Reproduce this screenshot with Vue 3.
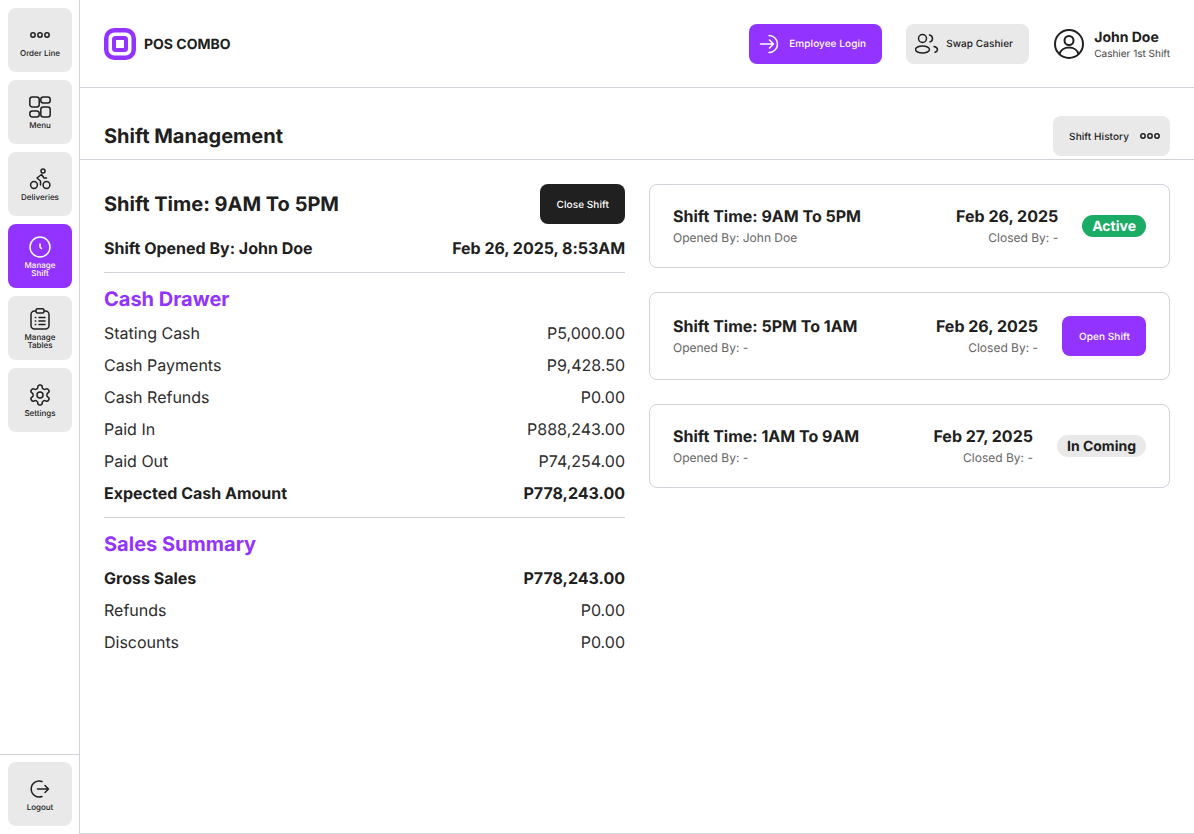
<template>
  <div class="app">
    <aside class="sidebar">
      <nav class="nav">
        <button class="nav-btn">
          <svg class="ico" viewBox="0 0 24 24"><circle cx="5" cy="12" r="2.2" /><circle cx="12" cy="12" r="2.2" /><circle cx="19" cy="12" r="2.2" /></svg>
          <span>Order Line</span>
        </button>
        <button class="nav-btn">
          <svg class="ico" viewBox="0 0 24 24"><rect x="1.8" y="2" width="9.4" height="10" rx="2.5" /><rect x="1.8" y="16" width="9.4" height="6" rx="2.5" /><rect x="12.8" y="2" width="9.4" height="6" rx="2.5" /><rect x="12.8" y="12" width="9.4" height="10" rx="2.5" /></svg>
          <span>Menu</span>
        </button>
        <button class="nav-btn">
          <svg class="ico" viewBox="0 0 24 24"><circle cx="18.500" cy="18" r="3.400" /><circle cx="6" cy="18" r="3.400" /><circle cx="15" cy="4" r="2" /><path d="M12.500 18v-4l-3.500-3 4.500-3.500 2.500 3.500h2.500" /></svg>
          <span>Deliveries</span>
        </button>
        <button class="nav-btn active">
          <svg class="ico" viewBox="0 0 24 24"><circle cx="12" cy="12" r="10" /><path d="M12 9v2.500c0 .9.600 1.600 1.500 2" /></svg>
          <span>Manage<br />Shift</span>
        </button>
        <button class="nav-btn">
          <svg class="ico" viewBox="0 0 24 24"><rect x="3" y="4" width="18" height="18" rx="3.500" /><rect x="8" y="1.800" width="8" height="4.200" rx="1.500" class="fill-bg" /><path d="M11 10.500h6M11 14h6M11 17.500h6M7.300 10.500h.4M7.300 14h.4M7.300 17.500h.4" /></svg>
          <span>Manage<br />Tables</span>
        </button>
        <button class="nav-btn">
          <svg class="ico" viewBox="0 0 24 24"><path d="M12.220 2h-.44a2 2 0 0 0-2 2v.18a2 2 0 0 1-1 1.730l-.43.25a2 2 0 0 1-2 0l-.15-.08a2 2 0 0 0-2.730.73l-.22.38a2 2 0 0 0 .73 2.730l.15.1a2 2 0 0 1 1 1.720v.51a2 2 0 0 1-1 1.740l-.15.09a2 2 0 0 0-.73 2.730l.22.38a2 2 0 0 0 2.730.73l.15-.08a2 2 0 0 1 2 0l.43.25a2 2 0 0 1 1 1.730V20a2 2 0 0 0 2 2h.44a2 2 0 0 0 2-2v-.18a2 2 0 0 1 1-1.730l.43-.25a2 2 0 0 1 2 0l.15.08a2 2 0 0 0 2.730-.73l.22-.39a2 2 0 0 0-.73-2.730l-.15-.08a2 2 0 0 1-1-1.740v-.5a2 2 0 0 1 1-1.740l.15-.09a2 2 0 0 0 .73-2.730l-.22-.38a2 2 0 0 0-2.730-.73l-.15.08a2 2 0 0 1-2 0l-.43-.25a2 2 0 0 1-1-1.730V4a2 2 0 0 0-2-2z" /><circle cx="12" cy="12" r="3" /></svg>
          <span>Settings</span>
        </button>
      </nav>
      <div class="nav-bottom">
        <button class="nav-btn">
          <svg class="ico" viewBox="0 0 24 24"><path d="M14 4.500a8 8 0 1 0 0 15" /><path d="M9.500 12h11M17 8.500l3.500 3.500-3.500 3.500" /></svg>
          <span>Logout</span>
        </button>
      </div>
    </aside>

    <main class="main">
      <header class="topbar">
        <div class="brand">
          <svg class="logo" viewBox="0 0 32 32"><rect x="2.250" y="2.250" width="27.500" height="27.500" rx="8" /><rect x="10" y="10" width="12" height="12" rx="1.500" class="logo-in" /></svg>
          <span>POS COMBO</span>
        </div>
        <div class="top-actions">
          <button class="btn btn-purple login">
            <svg class="ico" viewBox="0 0 24 24"><path d="M10 3.500a8.500 8.500 0 0 1 0 17" /><path d="M1.500 12h13M10.500 8l4 4-4 4" /></svg>
            <span>Employee Login</span>
          </button>
          <button class="btn btn-grey swap">
            <svg class="ico" viewBox="0 0 24 24"><circle cx="7.500" cy="6.500" r="4" /><ellipse cx="7.500" cy="17.500" rx="7" ry="3.500" /><path d="M14.500 3c1.700.3 3 1.700 3 3.500s-1 3-2.500 3.400M19 14.500c2 .5 3.500 1.600 3.500 3s-1 2.200-2.500 2.800" /></svg>
            <span>Swap Cashier</span>
          </button>
          <div class="profile">
            <svg class="avatar" viewBox="0 0 32 32"><circle cx="16" cy="16" r="14" /><circle cx="16" cy="12.500" r="4.500" /><path d="M6.500 26c1-4 5-6.500 9.500-6.500s8.500 2.500 9.500 6.500" /></svg>
            <div class="p-text">
              <div class="p-name">John Doe</div>
              <div class="p-role">Cashier 1st Shift</div>
            </div>
          </div>
        </div>
      </header>

      <div class="title-row">
        <h1>Shift Management</h1>
        <button class="btn btn-grey history">
          <span>Shift History</span>
          <svg class="ico" viewBox="0 0 24 24"><circle cx="5" cy="12" r="2.200" /><circle cx="12" cy="12" r="2.200" /><circle cx="19" cy="12" r="2.200" /></svg>
        </button>
      </div>

      <div class="content">
        <section class="detail">
          <div class="detail-head">
            <h2>Shift Time: 9AM To 5PM</h2>
            <button class="btn btn-dark text-btn"><span>Close Shift</span></button>
          </div>
          <div class="opened">
            <span>Shift Opened By: John Doe</span>
            <span class="stamp">Feb 26, 2025, 8:53AM</span>
          </div>

          <div class="block">
            <h3>Cash Drawer</h3>
            <div v-for="row in cashRows" :key="row.label" class="row" :class="{ strong: row.strong }">
              <span>{{ row.label }}</span>
              <span>{{ row.value }}</span>
            </div>
          </div>

          <div class="block last">
            <h3>Sales Summary</h3>
            <div v-for="row in salesRows" :key="row.label" class="row" :class="{ strong: row.strong }">
              <span>{{ row.label }}</span>
              <span>{{ row.value }}</span>
            </div>
          </div>
        </section>

        <section class="shifts">
          <div v-for="shift in shifts" :key="shift.time" class="card">
            <div class="card-left">
              <div class="card-title">Shift Time: {{ shift.time }}</div>
              <div class="card-sub">Opened By: {{ shift.openedBy }}</div>
            </div>
            <div class="card-right">
              <div class="card-title">{{ shift.date }}</div>
              <div class="card-sub">Closed By: -</div>
            </div>
            <span v-if="shift.status === 'active'" class="badge badge-green">Active</span>
            <span v-else-if="shift.status === 'coming'" class="badge badge-grey">In Coming</span>
            <button v-else class="btn btn-purple text-btn"><span>Open Shift</span></button>
          </div>
        </section>
      </div>
    </main>
  </div>
</template>

<script setup>
const cashRows = [
  { label: 'Stating Cash', value: 'P5,000.00' },
  { label: 'Cash Payments', value: 'P9,428.50' },
  { label: 'Cash Refunds', value: 'P0.00' },
  { label: 'Paid In', value: 'P888,243.00' },
  { label: 'Paid Out', value: 'P74,254.00' },
  { label: 'Expected Cash Amount', value: 'P778,243.00', strong: true },
]

const salesRows = [
  { label: 'Gross Sales', value: 'P778,243.00', strong: true },
  { label: 'Refunds', value: 'P0.00' },
  { label: 'Discounts', value: 'P0.00' },
]

const shifts = [
  { time: '9AM To 5PM', openedBy: 'John Doe', date: 'Feb 26, 2025', status: 'active' },
  { time: '5PM To 1AM', openedBy: '-', date: 'Feb 26, 2025', status: 'open' },
  { time: '1AM To 9AM', openedBy: '-', date: 'Feb 27, 2025', status: 'coming' },
]
</script>

<style>
html,
body {
  margin: 0;
  background: #fff;
}
</style>

<style scoped>
.app {
  display: flex;
  height: 834px;
  font-family: Inter, "Liberation Sans", sans-serif;
  text-rendering: geometricPrecision;
  color: #202020;
  background: #fff;
}

button {
  font-family: inherit;
  text-rendering: inherit;
  border: 0;
  padding: 0;
  cursor: pointer;
}

.ico {
  width: 24px;
  height: 24px;
  flex: none;
  fill: none;
  stroke: currentColor;
  stroke-width: 1.5;
  stroke-linecap: round;
  stroke-linejoin: round;
}

/* sidebar */
.sidebar {
  width: 80px;
  flex: none;
  box-sizing: border-box;
  border-right: 1px solid #d2d2da;
  display: flex;
  flex-direction: column;
  justify-content: space-between;
}

.nav {
  display: flex;
  flex-direction: column;
  gap: 8px;
  padding: 8px;
}

.nav-bottom {
  border-top: 1px solid #d2d2da;
  padding: 7px 7px 8px 8px;
}

.nav-btn {
  width: 64px;
  height: 64px;
  border-radius: 8px;
  background: #e9e9e9;
  color: #202020;
  display: flex;
  flex-direction: column;
  align-items: center;
  justify-content: center;
  gap: 2px;
  font-size: 8px;
  line-height: 8px;
  font-weight: 500;
}

.nav-btn.active {
  background: #9333ff;
  color: #fff;
}

.fill-bg {
  fill: #e9e9e9;
}

/* header */
.main {
  flex: 1;
  min-width: 0;
  box-sizing: border-box;
  border-bottom: 1px solid #d2d2da;
  display: flex;
  flex-direction: column;
}

.topbar {
  height: 88px;
  box-sizing: border-box;
  border-bottom: 1px solid #d2d2da;
  padding: 0 24px;
  display: flex;
  align-items: center;
  justify-content: space-between;
}

.brand {
  display: flex;
  align-items: center;
  gap: 8px;
  font-size: 14px;
  line-height: 18px;
  font-weight: 700;
}

.brand span {
  margin-top: 2px;
}

.logo {
  width: 32px;
  height: 32px;
  fill: none;
  stroke: #9333ff;
  stroke-width: 4.500;
}

.logo-in {
  stroke-width: 4;
}

.top-actions {
  display: flex;
  align-items: center;
  gap: 24px;
}

.btn {
  height: 40px;
  border-radius: 8px;
  display: flex;
  align-items: center;
  gap: 6px;
  padding: 0 16px 0 10px;
  font-size: 10px;
  line-height: 13px;
  font-weight: 500;
  letter-spacing: 0.07px;
}

.btn span {
  margin-top: 2px;
}

.login {
  width: 133px;
  box-sizing: border-box;
}

.swap {
  width: 123px;
  box-sizing: border-box;
  padding-left: 9px;
  gap: 7px;
}

.text-btn {
  padding: 0 16px 0 17px;
}

.btn-purple {
  background: #9333ff;
  color: #fff;
}

.btn-grey {
  background: #e9e9e9;
  color: #202020;
}

.btn-dark {
  background: #202020;
  color: #fff;
}

.profile {
  display: flex;
  align-items: center;
  gap: 9px;
}

.p-text {
  margin-top: 2px;
}

.avatar {
  width: 32px;
  height: 32px;
  fill: none;
  stroke: #202020;
  stroke-width: 2;
}

.p-name {
  font-size: 14px;
  line-height: 18px;
  font-weight: 700;
}

.p-role {
  font-size: 10px;
  line-height: 12px;
  margin-top: 1px;
  color: #444;
}

/* title */
.title-row {
  height: 72px;
  box-sizing: border-box;
  border-bottom: 1px solid #d2d2da;
  padding: 28px 24px 0;
  display: flex;
  align-items: flex-start;
  justify-content: space-between;
}

h1 {
  margin: 0;
  font-size: 20px;
  line-height: 40px;
  font-weight: 700;
}

.history {
  gap: 9px;
  padding: 0 8px 0 16px;
}

/* layout */
.content {
  display: grid;
  grid-template-columns: 521px 521px;
  gap: 24px;
  padding: 24px;
}

.detail-head {
  display: flex;
  align-items: center;
  justify-content: space-between;
}

h2 {
  margin: 0;
  font-size: 20px;
  font-weight: 700;
}

.opened {
  display: flex;
  justify-content: space-between;
  margin-top: 12px;
  padding-bottom: 12px;
  font-size: 16px;
  line-height: 24px;
  font-weight: 700;
  border-bottom: 1px solid #d2d2da;
}

.stamp {
  letter-spacing: -0.04px;
}

.block {
  padding: 14px 0 12px;
  display: flex;
  flex-direction: column;
  gap: 8px;
  border-bottom: 1px solid #d2d2da;
}

.block.last {
  border-bottom: 0;
}

h3 {
  margin: 0 0 2px;
  font-size: 20px;
  line-height: 24px;
  font-weight: 700;
  color: #9333ff;
}

.row {
  display: flex;
  justify-content: space-between;
  font-size: 16px;
  line-height: 24px;
  color: #2c2c2c;
}

.row.strong {
  font-weight: 700;
  color: #202020;
}

/* shift cards */
.shifts {
  display: flex;
  flex-direction: column;
  gap: 24px;
  align-items: stretch;
}

.card {
  border: 1px solid #d2d2da;
  border-radius: 8px;
  padding: 23px;
  display: flex;
  align-items: center;
  gap: 24px;
}

.card-left {
  flex: 1;
}

.card-right {
  text-align: right;
}

.card-title {
  font-size: 16px;
  line-height: 17px;
  font-weight: 700;
}

.card-sub {
  font-size: 12px;
  line-height: 15px;
  margin-top: 5px;
  margin-bottom: -1px;
  color: #666;
}

.badge {
  height: 22px;
  border-radius: 11px;
  padding: 0 10px;
  font-size: 14px;
  line-height: 23px;
  font-weight: 700;
}

.badge-green {
  background: #1aab65;
  color: #fff;
}

.badge-grey {
  background: #e9e9e9;
  color: #202020;
}
</style>
